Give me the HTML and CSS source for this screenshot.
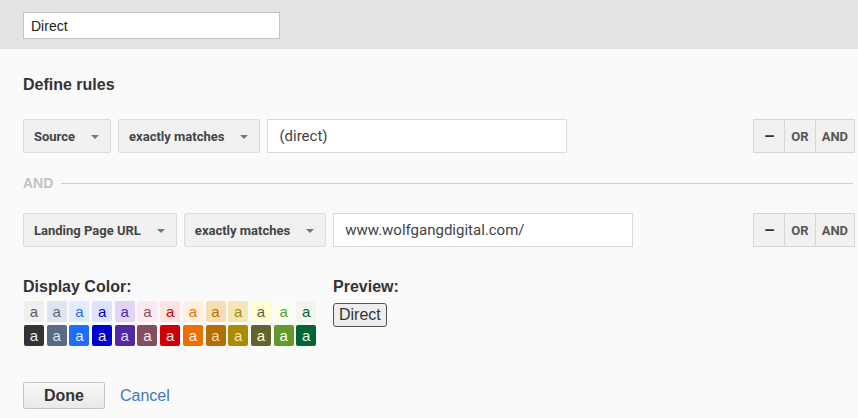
FILE: index.html
```html
<!DOCTYPE html>
<html lang="en">
  <head>
    <meta charset="UTF-8" />
    <meta name="viewport" content="width=device-width, initial-scale=1.0" />
    <title>Channel rule</title>
    <link rel="stylesheet" href="styles.css">
  </head>
  <body>
    <div class="name-bar">
      <input class="name-input" type="text" value="Direct" />
    </div>

    <div class="editor">
      <div class="title">Define rules</div>

      <div class="rule-row">
        <div class="dropdown">Source <span class="caret"></span></div>
        <div class="dropdown">exactly matches <span class="caret"></span></div>
        <input class="value-input" type="text" value="(direct)" />
        <div class="rule-actions">
          <span class="act minus">&ndash;</span>
          <span class="act">OR</span>
          <span class="act">AND</span>
        </div>
      </div>

      <div class="separator">
        <span class="sep-label">AND</span>
        <span class="sep-line"></span>
      </div>

      <div class="rule-row">
        <div class="dropdown">Landing Page URL <span class="caret"></span></div>
        <div class="dropdown">exactly matches <span class="caret"></span></div>
        <input class="value-input" type="text" value="www.wolfgangdigital.com/" />
        <div class="rule-actions">
          <span class="act minus">&ndash;</span>
          <span class="act">OR</span>
          <span class="act">AND</span>
        </div>
      </div>

      <div class="color-section">
        <div class="color-col">
          <div class="label">Display Color:</div>
          <div class="swatches">
            <span class="sw l1">a</span>
            <span class="sw l2">a</span>
            <span class="sw l3">a</span>
            <span class="sw l4">a</span>
            <span class="sw l5">a</span>
            <span class="sw l6">a</span>
            <span class="sw l7">a</span>
            <span class="sw l8">a</span>
            <span class="sw l9">a</span>
            <span class="sw l10">a</span>
            <span class="sw l11">a</span>
            <span class="sw l12">a</span>
            <span class="sw l13">a</span>
            <span class="sw d1">a</span>
            <span class="sw d2">a</span>
            <span class="sw d3">a</span>
            <span class="sw d4">a</span>
            <span class="sw d5">a</span>
            <span class="sw d6">a</span>
            <span class="sw d7">a</span>
            <span class="sw d8">a</span>
            <span class="sw d9">a</span>
            <span class="sw d10">a</span>
            <span class="sw d11">a</span>
            <span class="sw d12">a</span>
            <span class="sw d13">a</span>
          </div>
        </div>
        <div class="preview-col">
          <div class="label">Preview:</div>
          <span class="preview-chip">Direct</span>
        </div>
      </div>

      <div class="footer">
        <button type="button" class="done-btn">Done</button>
        <a href="#" class="cancel-link">Cancel</a>
      </div>
    </div>
  </body>
</html>
```

FILE: styles.css
```css
body {
  margin: 0;
  background: #fafafa;
  font-family: "Liberation Sans", Arial, sans-serif;
  color: #333;
}

.name-bar {
  height: 49px;
  box-sizing: border-box;
  padding: 12px 23px 0;
  background: #e3e3e3;
}

.name-input {
  display: block;
  width: 257px;
  height: 27px;
  box-sizing: border-box;
  margin: 0;
  padding: 0 7px;
  border: 1px solid #c4c4c4;
  background: #fff;
  font-family: "Liberation Sans", Arial, sans-serif;
  font-size: 14px;
  color: #222;
}

.editor {
  padding: 27px 3px 0 23px;
}

.title {
  font-size: 16px;
  line-height: 18px;
  font-weight: bold;
  color: #333;
}

.rule-row {
  display: flex;
  align-items: center;
  gap: 7px;
  margin-top: 25px;
  height: 34px;
}

.separator + .rule-row {
  margin-top: 22px;
}

.dropdown {
  display: flex;
  align-items: center;
  gap: 16px;
  height: 34px;
  box-sizing: border-box;
  padding: 0 11px 0 10px;
  border: 1px solid #dcdcdc;
  border-radius: 2px;
  background: #f1f1f1;
  font-family: Roboto, "Liberation Sans", sans-serif;
  font-size: 13px;
  font-weight: bold;
  color: #444;
}

.caret {
  width: 0;
  height: 0;
  border-left: 4px solid transparent;
  border-right: 4px solid transparent;
  border-top: 4px solid #777;
  margin-top: 2px;
}

.value-input {
  width: 300px;
  height: 34px;
  box-sizing: border-box;
  margin: 0;
  padding: 0 11px;
  border: 1px solid #dadada;
  background: #fff;
  font-family: Roboto, "Liberation Sans", sans-serif;
  font-size: 15px;
  color: #444;
}

.rule-actions {
  display: flex;
  margin-left: auto;
  height: 34px;
  border: 1px solid #d6d6d6;
  box-sizing: border-box;
  background: #f1f1f1;
}

.act {
  display: flex;
  align-items: center;
  justify-content: center;
  padding: 0 6px;
  border-left: 1px solid #d6d6d6;
  font-family: Roboto, "Liberation Sans", sans-serif;
  font-size: 13px;
  font-weight: bold;
  color: #555;
}

.act:first-child {
  border-left: none;
}

.minus {
  width: 30px;
  box-sizing: border-box;
  font-size: 17px;
  color: #333;
}

.separator {
  display: flex;
  align-items: center;
  gap: 8px;
  margin-top: 22px;
  height: 16px;
}

.sep-label {
  font-size: 14px;
  font-weight: bold;
  color: #c2c2c2;
}

.sep-line {
  flex: 1;
  height: 1px;
  background: #cfcfcf;
  margin-right: 2px;
}

.color-section {
  display: flex;
  margin-top: 31px;
}

.color-col {
  width: 310px;
}

.label {
  font-size: 16px;
  line-height: 18px;
  font-weight: bold;
  color: #333;
}

.swatches {
  display: grid;
  grid-template-columns: repeat(13, 20px);
  grid-auto-rows: 21px;
  gap: 3px 2.7px;
  margin-top: 5px;
  padding-left: 1px;
}

.sw {
  display: flex;
  align-items: center;
  justify-content: center;
  border-radius: 2px;
  font-size: 15px;
  line-height: 1;
}

.l1 { background: #efefef; color: #5a5a5a; }
.l2 { background: #dfe4ef; color: #5a6986; }
.l3 { background: #e0ecff; color: #206cff; }
.l4 { background: #dfe2ff; color: #0000cc; }
.l5 { background: #e0d5f9; color: #5229a3; }
.l6 { background: #fde9f4; color: #854f61; }
.l7 { background: #ffe3e3; color: #cc0000; }
.l8 { background: #fff0e1; color: #ec7000; }
.l9 { background: #fadcb3; color: #b36d00; }
.l10 { background: #f3e7b3; color: #ab8b00; }
.l11 { background: #ffffd4; color: #636330; }
.l12 { background: #f9ffef; color: #64992c; }
.l13 { background: #f1f5ec; color: #006633; }

.d1 { background: #333333; color: #eeeeee; }
.d2 { background: #5a6986; color: #dfe4ef; }
.d3 { background: #206cff; color: #e0ecff; }
.d4 { background: #0000cc; color: #dfe2ff; }
.d5 { background: #5229a3; color: #e0d5f9; }
.d6 { background: #854f61; color: #fde9f4; }
.d7 { background: #cc0000; color: #ffe3e3; }
.d8 { background: #ec7000; color: #fff0e1; }
.d9 { background: #b36d00; color: #fadcb3; }
.d10 { background: #ab8b00; color: #f3e7b3; }
.d11 { background: #636330; color: #ffffd4; }
.d12 { background: #64992c; color: #f9ffef; }
.d13 { background: #006633; color: #f1f5ec; }

.preview-col {
  display: flex;
  flex-direction: column;
  align-items: flex-start;
}

.preview-chip {
  margin-top: 7px;
  padding: 1px 5px;
  border: 1px solid #555;
  border-radius: 3px;
  background: #eeeeee;
  font-size: 16px;
  line-height: 20px;
  color: #333;
}

.footer {
  display: flex;
  align-items: center;
  gap: 15px;
  margin-top: 36px;
}

.done-btn {
  width: 82px;
  height: 27px;
  border: 1px solid #c6c6c6;
  border-radius: 2px;
  background: linear-gradient(#f8f8f8, #e9e9e9);
  font-family: "Liberation Sans", Arial, sans-serif;
  font-size: 16px;
  font-weight: bold;
  color: #333;
}

.cancel-link {
  font-size: 16px;
  color: #3d78bd;
  text-decoration: none;
}
```
